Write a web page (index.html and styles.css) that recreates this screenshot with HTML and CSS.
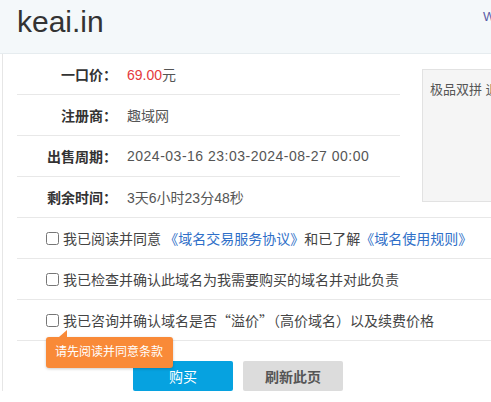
FILE: index.html
```html
<!DOCTYPE html>
<html lang="zh-CN">
<head>
  <meta charset="UTF-8">
  <meta name="viewport" content="width=device-width, initial-scale=1.0">
  <title>keai.in 域名出售</title>
  <link rel="stylesheet" href="styles.css">
</head>
<body>
  <div class="head">
    <h1>keai.in</h1>
    <a class="whois" href="#">WHOIS查询</a>
  </div>

  <div class="main">
    <div class="info">
      <table class="detail">
        <tr>
          <th>一口价：</th>
          <td><span class="price">69.00</span>元</td>
        </tr>
        <tr>
          <th>注册商：</th>
          <td>趣域网</td>
        </tr>
        <tr>
          <th>出售周期：</th>
          <td class="period">2024-03-16 23:03-2024-08-27 00:00</td>
        </tr>
        <tr>
          <th>剩余时间：</th>
          <td>3天6小时23分48秒</td>
        </tr>
      </table>
      <div class="desc">极品双拼 退出后台 域名简介</div>
    </div>

    <div class="terms">
      <label class="term">
        <input type="checkbox">
        <span>我已阅读并同意 <a href="#">《域名交易服务协议》</a>和已了解<a href="#">《域名使用规则》</a></span>
      </label>
      <label class="term">
        <input type="checkbox">
        <span>我已检查并确认此域名为我需要购买的域名并对此负责</span>
      </label>
      <label class="term">
        <input type="checkbox">
        <span>我已咨询并确认域名是否“溢价”（高价域名）以及续费价格</span>
      </label>
    </div>

    <div class="actions">
      <div class="tip">请先阅读并同意条款</div>
      <button class="btn btn-buy">购买</button>
      <button class="btn btn-refresh">刷新此页</button>
    </div>
  </div>
</body>
</html>
```

FILE: styles.css
```css
html, body {
  overflow: hidden;
}
body {
  margin: 0;
  font-family: "Liberation Sans", "Noto Sans CJK SC", sans-serif;
  font-size: 14px;
  color: #555;
}
a {
  color: #2f6fc8;
  text-decoration: none;
}
.head {
  display: flex;
  align-items: flex-start;
  height: 53px;
  padding-left: 17px;
  background-color: #f4f8fa;
  border-bottom: 1px solid #e6ecef;
}
.head h1 {
  flex: 0 0 466px;
  margin: 0;
  padding-top: 5px;
  font-family: "Liberation Sans", sans-serif;
  font-size: 30px;
  font-weight: normal;
  line-height: 34px;
  color: #333;
}
.whois {
  margin-top: 6px;
  font-size: 13px;
  color: #5b5ea8;
  white-space: nowrap;
}
.main {
  width: 700px;
  margin-left: 2px;
  padding-left: 14px;
  border-left: 1px solid #e6e6e6;
}
.info {
  display: flex;
  align-items: flex-start;
  gap: 22px;
}
.detail {
  width: 383px;
  border-collapse: collapse;
}
.detail th,
.detail td {
  height: 40px;
  padding: 0;
  border-bottom: 1px solid #e8e8e8;
}
.detail tr:last-child th,
.detail tr:last-child td {
  border-bottom: none;
}
.detail th {
  width: 100px;
  padding-right: 10px;
  text-align: right;
  font-weight: bold;
  color: #333;
}
.detail td {
  color: #555;
}
.detail .period {
  letter-spacing: 0.5px;
}
.price {
  color: #e4393c;
}
.desc {
  width: 200px;
  height: 111px;
  margin-top: 15px;
  padding: 9px 7px 11px;
  background-color: #f5f5f5;
  border: 1px solid #e2e2e2;
  font-size: 13px;
  color: #555;
  white-space: nowrap;
}
.terms {
  border-top: 1px solid #e8e8e8;
}
.term {
  display: flex;
  align-items: center;
  height: 40px;
  padding-left: 29px;
  border-bottom: 1px solid #e8e8e8;
  font-family: "Noto Sans CJK SC", sans-serif;
  color: #444;
}
.term input {
  width: 13px;
  height: 13px;
  margin: 1px 4px 0 0;
}
.actions {
  position: relative;
  display: flex;
  gap: 10px;
  padding: 20px 0 0 116px;
}
.btn {
  width: 100px;
  height: 30px;
  border: none;
  border-radius: 2px;
  font-family: "Noto Sans CJK SC", sans-serif;
  font-size: 14px;
  cursor: pointer;
}
.btn-buy {
  background-color: #06a2e0;
  color: white;
}
.btn-refresh {
  background-color: #dcdcdc;
  color: #555;
  font-weight: bold;
}
.tip {
  position: absolute;
  top: -4px;
  left: 29px;
  padding: 0 10px 0 9px;
  height: 31px;
  line-height: 31px;
  background-color: #f98a38;
  color: white;
  font-size: 12px;
  border-radius: 3px;
  box-shadow: 0 1px 3px rgba(0, 0, 0, 0.2);
  white-space: nowrap;
}
.tip::before {
  content: "";
  position: absolute;
  top: -7px;
  left: 13px;
  border-style: solid;
  border-width: 0 0 7px 8px;
  border-color: transparent transparent #f98a38 transparent;
}
```
